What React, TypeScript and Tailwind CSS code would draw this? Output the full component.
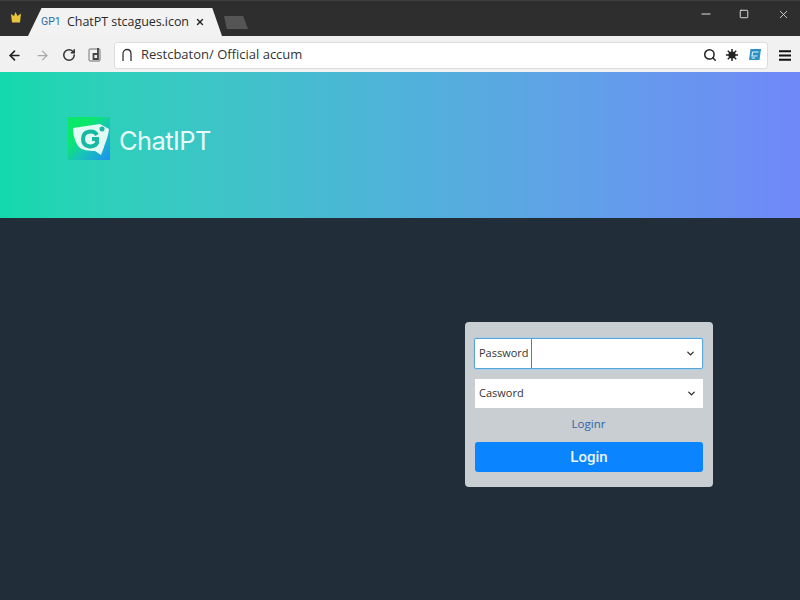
import { Search, ChevronDown, ArrowLeft, ArrowRight, RotateCw, Minus, Square, X } from "lucide-react";

function Logo() {
  return (
    <svg width="42" height="43" viewBox="0 0 42 43" className="shrink-0 mb-[6px]">
      <defs>
        <linearGradient id="logoBg" x1="0" y1="0" x2="1" y2="1">
          <stop offset="0.3" stopColor="#0ae86c" />
          <stop offset="0.6" stopColor="#18c4b8" />
          <stop offset="1" stopColor="#1e90f0" />
        </linearGradient>
      </defs>
      <rect width="42" height="43" fill="url(#logoBg)" />
      <path d="M5 11 L32 7 L41 12 C40 21 37 26 36 30 L33 38 L27 34 C20 34 14 33 11 30 C7 25 5 18 5 11 Z" fill="#e2faf4" />
      <path d="M29 18 C26 13 15 13 15 22 C15 31 26 31 29 26 L29 22 H24" fill="none" stroke="#17b9a3" strokeWidth="4" />
      <circle cx="34" cy="12" r="2.5" fill="#17b9a3" />
    </svg>
  );
}

function SelectField({ label, focused }: { label: string; focused?: boolean }) {
  return (
    <div
      className={
        focused
          ? "flex items-center h-[31px] bg-white border border-[#5aa5d8] shadow-[0_0_0_1px_#a9cfe8] rounded-[2px]"
          : "flex items-center h-[29px] ml-[1px] bg-white"
      }
    >
      <span
        className={
          focused
            ? "h-full flex items-center pl-[4px] pr-[2px] border-r border-[#4a86a8] text-[11px] text-[#333] font-['Open_Sans',sans-serif]"
            : "flex items-center pl-[4px] text-[11px] text-[#333] font-['Open_Sans',sans-serif]"
        }
      >
        {label}
      </span>
      <ChevronDown className="ml-auto mr-[6px] w-[11px] h-[11px] text-[#222]" strokeWidth={2.6} />
    </div>
  );
}

export default function App() {
  return (
    <div className="w-[800px] h-[600px] flex flex-col overflow-hidden bg-[#212d38] font-['Roboto',sans-serif]">
      <div className="h-[36px] shrink-0 flex items-end bg-[#2e2e2e] border-t border-[#3f3f3f]">
        <div className="w-[28px] h-full flex items-center justify-center">
          <svg width="10" height="11" viewBox="0 0 10 11" className="ml-[3px] mb-[2px]">
            <path d="M0 2 L3 4 L4.5 0 L6.5 4 L10 1.5 L9 10.5 L1 10.5 Z" fill="#e8c33c" />
          </svg>
        </div>
        <div className="w-[194px] h-[28px] flex items-center pl-[13px] bg-[#f2f2f2] [clip-path:polygon(0_100%,7%_0,95%_0,100%_100%)]">
          <span className="w-[26px] text-[10.5px] text-[#2b6ea8]">GP1</span>
          <span className="text-[12.5px] text-[#2a2a2a] font-['Open_Sans',sans-serif] whitespace-nowrap tracking-[-0.05px]">ChatPT stcagues.icon</span>
          <X className="w-[10px] h-[10px] ml-[6px] text-[#222]" strokeWidth={3.2} />
        </div>
        <div className="w-[24px] h-[13px] mb-[7px] ml-[2px] bg-[#555] [clip-path:polygon(0_0,80%_0,100%_100%,12%_100%)]" />
        <div className="ml-auto self-start mt-[6px] flex items-center text-[#ddd]">
          <Minus className="w-[14px] h-[14px] mr-[26px]" strokeWidth={1.8} />
          <Square className="w-[10px] h-[10px] mr-[28px] text-[#e8e8e8]" strokeWidth={2.2} />
          <X className="w-[13px] h-[13px] mr-[10px]" strokeWidth={1.6} />
        </div>
      </div>

      <div className="h-[36px] shrink-0 flex items-center pt-[2px] bg-[#f1f1f1]">
        <ArrowLeft className="w-[15px] h-[15px] ml-[7px] text-[#222]" strokeWidth={2.6} />
        <ArrowRight className="w-[15px] h-[15px] ml-[13px] text-[#aaa]" strokeWidth={2} />
        <RotateCw className="w-[14px] h-[14px] ml-[12px] text-[#333]" strokeWidth={2.6} />
        <svg width="16" height="16" viewBox="0 0 16 16" className="ml-[12px]">
          <rect x="1" y="2" width="11" height="12" rx="1.5" fill="none" stroke="#999" strokeWidth="1.4" />
          <path d="M10 1 V12 H5.5 V7 H10" fill="none" stroke="#444" strokeWidth="1.8" />
        </svg>
        <div className="ml-[10px] w-[654px] h-[27px] flex items-center bg-white border border-[#dcdcdc] rounded-[3px]">
          <svg width="12" height="14" viewBox="0 0 12 14" className="ml-[6px]">
            <path d="M2 13 V6 C2 0 10 0 10 6 V13" fill="none" stroke="#333" strokeWidth="1.3" />
          </svg>
          <span className="ml-[8px] text-[13px] text-[#333] font-['Open_Sans',sans-serif] whitespace-nowrap">Restcbaton/ Official accum</span>
          <Search className="ml-auto w-[14px] h-[14px] text-[#222]" strokeWidth={2.6} />
          <svg width="12" height="12" viewBox="0 0 12 12" className="ml-[9px]">
            <circle cx="6" cy="6" r="3.6" fill="#222" />
            <path d="M6 0 V12 M0 6 H12 M1.8 1.8 L10.2 10.2 M10.2 1.8 L1.8 10.2" stroke="#222" strokeWidth="1.5" />
          </svg>
          <svg width="14" height="14" viewBox="0 0 14 14" className="ml-[10px] mr-[5px]">
            <path d="M2.5 1 H13 L11.5 12 H1 Z" fill="#2a8fc4" />
            <path d="M4.5 4 H10.5 M4.5 4 L4 8 H9.5 M3.5 10 H7" fill="none" stroke="#e8f4fa" strokeWidth="1.1" />
          </svg>
        </div>
        <svg width="12" height="11" viewBox="0 0 12 11" className="ml-[11px]">
          <path d="M0 1.2 H12 M0 5.5 H12 M0 9.8 H12" stroke="#111" strokeWidth="2" />
        </svg>
      </div>

      <div className="h-[146px] shrink-0 flex items-center pl-[68px] pb-[7px] gap-[9px] bg-gradient-to-r from-[#12d9ad] via-[#4fb2da] to-[#7088f8]">
        <Logo />
        <span className="text-[25.5px] text-[#e6fbfa] font-['Inter',sans-serif] tracking-[-0.6px]">ChatIPT</span>
      </div>

      <div className="flex-1 flex justify-end pr-[87px] pt-[104px]">
        <div className="w-[248px] h-[165px] flex flex-col pl-[9px] pr-[10px] pt-[16px] bg-[#c8ced2] rounded-[4px]">
          <SelectField label="Password" focused />
          <div className="h-[10px]" />
          <SelectField label="Casword" />
          <p className="mt-[7px] text-center text-[11.5px] text-[#2d66a8] font-['Open_Sans',sans-serif]">Loginr</p>
          <button className="mt-[10px] ml-[1px] h-[30px] bg-[#0a84ff] rounded-[3px] text-[15px] font-medium text-[#eaf6ff]">Login</button>
        </div>
      </div>
    </div>
  );
}
